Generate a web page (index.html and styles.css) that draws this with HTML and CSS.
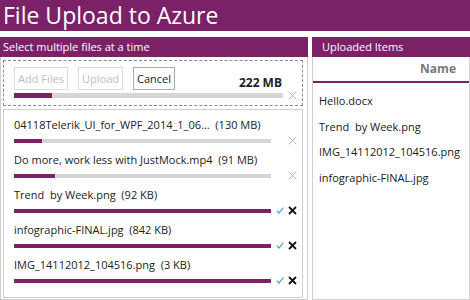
FILE: index.html
```html
<!DOCTYPE html>
<html>
<head>
<meta charset="utf-8">
<link rel="stylesheet" href="styles.css">
</head>
<body>
<div class="titlebar">File Upload to Azure</div>
<div class="main">
  <section class="left">
    <div class="phead">Select multiple files at a time</div>
    <div class="lbody">
      <div class="dropzone">
        <div class="toolbar">
          <button class="btn disabled add">Add Files</button>
          <button class="btn disabled upl">Upload</button>
          <button class="btn cancel">Cancel</button>
          <span class="total">222 MB</span>
        </div>
        <div class="barrow">
          <div class="bar total-bar"><div class="fill" style="width:14%"></div></div>
          <span class="icons"><svg class="x gray" width="9" height="9" viewBox="0 0 9 9"><path d="M1 1L8 8M8 1L1 8"/></svg></span>
        </div>
      </div>
      <div class="filelist">
        <div class="item">
          <div class="fname">04118Telerik_UI_for_WPF_2014_1_06...  (130 MB)</div>
          <div class="barrow">
            <div class="bar"><div class="fill" style="width:11%"></div></div>
            <span class="icons"><svg class="x gray" width="9" height="9" viewBox="0 0 9 9"><path d="M1 1L8 8M8 1L1 8"/></svg></span>
          </div>
        </div>
        <div class="item">
          <div class="fname">Do more, work less with JustMock.mp4  (91 MB)</div>
          <div class="barrow">
            <div class="bar"><div class="fill" style="width:16%"></div></div>
            <span class="icons"><svg class="x gray" width="9" height="9" viewBox="0 0 9 9"><path d="M1 1L8 8M8 1L1 8"/></svg></span>
          </div>
        </div>
        <div class="item">
          <div class="fname">Trend  by Week.png  (92 KB)</div>
          <div class="barrow">
            <div class="bar"><div class="fill" style="width:100%"></div></div>
            <span class="icons"><svg class="check" width="8" height="7" viewBox="0 0 8 7"><path d="M0.8 3.6L3 6L7.3 0.6"/></svg><svg class="x dark" width="9" height="9" viewBox="0 0 9 9"><path d="M1 1L8 8M8 1L1 8"/></svg></span>
          </div>
        </div>
        <div class="item">
          <div class="fname">infographic-FINAL.jpg  (842 KB)</div>
          <div class="barrow">
            <div class="bar"><div class="fill" style="width:100%"></div></div>
            <span class="icons"><svg class="check" width="8" height="7" viewBox="0 0 8 7"><path d="M0.8 3.6L3 6L7.3 0.6"/></svg><svg class="x dark" width="9" height="9" viewBox="0 0 9 9"><path d="M1 1L8 8M8 1L1 8"/></svg></span>
          </div>
        </div>
        <div class="item">
          <div class="fname">IMG_14112012_104516.png  (3 KB)</div>
          <div class="barrow">
            <div class="bar"><div class="fill" style="width:100%"></div></div>
            <span class="icons"><svg class="check" width="8" height="7" viewBox="0 0 8 7"><path d="M0.8 3.6L3 6L7.3 0.6"/></svg><svg class="x dark" width="9" height="9" viewBox="0 0 9 9"><path d="M1 1L8 8M8 1L1 8"/></svg></span>
          </div>
        </div>
      </div>
    </div>
  </section>
  <section class="right">
    <div class="phead rhead">Uploaded Items</div>
    <div class="rbody">
      <div class="colhead">Name</div>
      <ul class="uploaded">
        <li>Hello.docx</li>
        <li>Trend  by Week.png</li>
        <li>IMG_14112012_104516.png</li>
        <li>infographic-FINAL.jpg</li>
      </ul>
    </div>
  </section>
</div>
</body>
</html>
```
FILE: styles.css
```css
* { box-sizing: border-box; }
html, body { margin: 0; padding: 0; }
body {
  width: 470px;
  height: 300px;
  overflow: hidden;
  background: #fff;
  font-family: "Open Sans", "Noto Sans", sans-serif;
  font-size: 11px;
  color: #222;
}
.titlebar {
  height: 31px;
  background: #7a2168;
  color: #fff;
  font-size: 23px;
  line-height: 31px;
  padding-left: 3px;
  white-space: nowrap;
}
.main {
  display: flex;
  margin-top: 6px;
  height: 263px;
}
.phead {
  height: 20px;
  background: #7a2168;
  color: #fff;
  font-size: 11px;
  line-height: 20px;
  padding-left: 3px;
  white-space: nowrap;
}
.left {
  width: 308px;
  display: flex;
  flex-direction: column;
}
.lbody {
  flex: 1;
  border: 1px solid #cfcfcf;
  border-top: none;
  padding: 3px 4px 1px 2px;
  display: flex;
  flex-direction: column;
}
.dropzone {
  height: 46px;
  border: 1px dashed #8a8a8a;
  padding: 6px 5px 0 10px;
}
.toolbar {
  display: flex;
  align-items: flex-end;
  height: 23px;
}
.btn {
  height: 23px;
  padding: 0;
  margin: 0 10px 0 0;
  background: #fff;
  font-family: inherit;
  font-size: 11px;
  line-height: 20px;
  white-space: nowrap;
  text-align: center;
  border: 1px solid #dcdcdc;
  color: #bdbdbd;
}
.btn.add { width: 54px; }
.btn.upl { width: 45px; }
.btn.cancel {
  width: 42px;
  border-color: #acacac;
  color: #1a1a1a;
}
.total {
  margin-left: auto;
  margin-right: 15px;
  font-weight: bold;
  font-size: 12px;
  line-height: 14px;
  color: #222;
}
.barrow {
  display: flex;
  align-items: center;
  height: 9px;
}
.dropzone .barrow { margin-top: 1px; }
.bar {
  flex: 1;
  height: 4px;
  background: #d6d6d6;
}
.total-bar { height: 5px; }
.fill {
  height: 100%;
  background: #7a2168;
}
.icons {
  width: 31px;
  display: flex;
  align-items: center;
  justify-content: flex-end;
  gap: 4px;
  padding-right: 5px;
}
.dropzone .icons { width: 14px; padding-right: 0; }
.x path { fill: none; stroke-linecap: square; }
.x.gray path { stroke: #b4b4b4; stroke-width: 1; }
.x.dark path { stroke: #111; stroke-width: 1.8; stroke-linecap: butt; }
.check path { fill: none; stroke: #4aa2d6; stroke-width: 1.2; }
.filelist {
  margin-top: 3px;
  flex: 1;
  border: 1px solid #cfcfcf;
  padding: 7px 0 0 10px;
}
.item { height: 35px; }
.fname {
  height: 16px;
  line-height: 16px;
  white-space: pre;
  color: #222;
}
.item .barrow { margin-top: 3px; }
.right {
  margin-left: 4px;
  width: 158px;
  display: flex;
  flex-direction: column;
}
.rhead { padding-left: 10px; }
.rbody {
  flex: 1;
  border: 1px solid #cfcfcf;
  border-top: none;
}
.colhead {
  height: 26px;
  border-bottom: 2px solid #7a2168;
  text-align: right;
  padding-right: 13px;
  font-weight: bold;
  font-size: 12px;
  line-height: 24px;
  color: #7a7a7a;
}
.uploaded {
  list-style: none;
  margin: 0;
  padding: 5px 0 0 6px;
}
.uploaded li {
  height: 25.5px;
  line-height: 25px;
  white-space: pre;
  color: #1a1a1a;
}
```
